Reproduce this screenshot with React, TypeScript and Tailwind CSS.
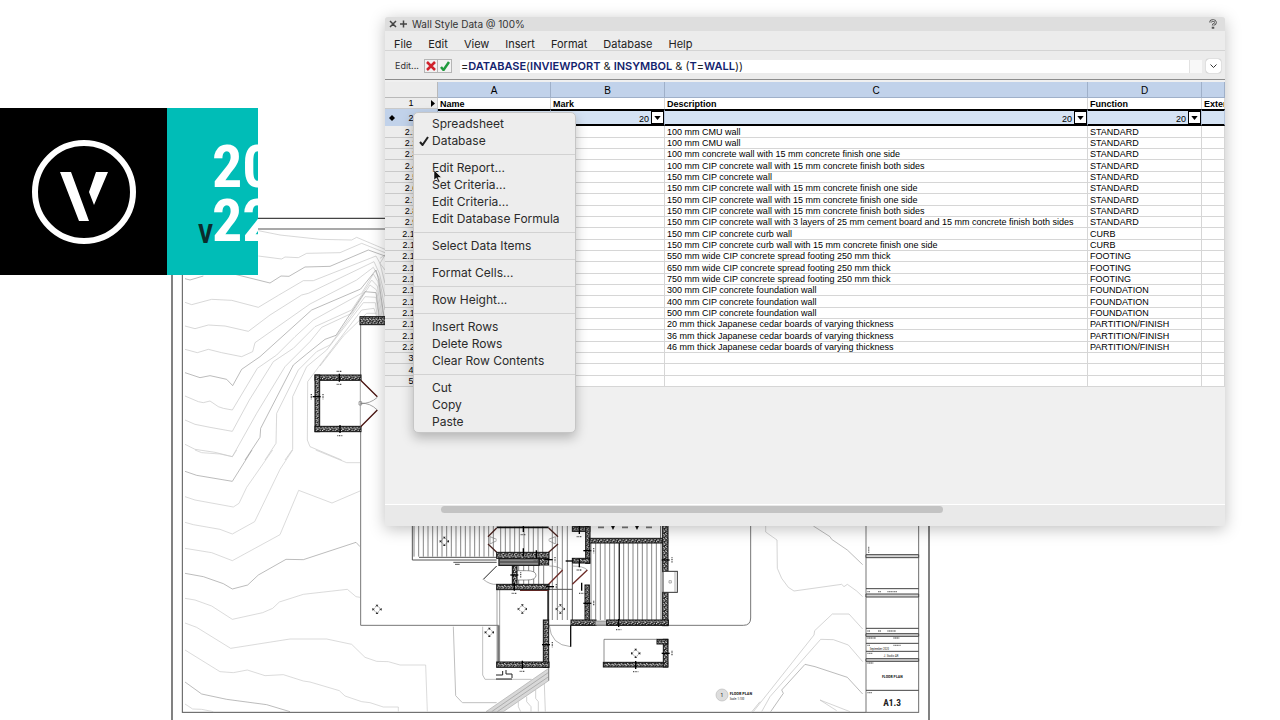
import { Fragment } from "react";

const menuBar = ["File", "Edit", "View", "Insert", "Format", "Database", "Help"];

const contextMenu = [
  ["Spreadsheet", "Database"],
  ["Edit Report...", "Set Criteria...", "Edit Criteria...", "Edit Database Formula"],
  ["Select Data Items"],
  ["Format Cells..."],
  ["Row Height..."],
  ["Insert Rows", "Delete Rows", "Clear Row Contents"],
  ["Cut", "Copy", "Paste"],
];

const walls = [
  ["100 mm CMU wall", "STANDARD"],
  ["100 mm CMU wall", "STANDARD"],
  ["100 mm concrete wall with 15 mm concrete finish one side", "STANDARD"],
  ["100 mm CIP concrete wall with 15 mm concrete finish both sides", "STANDARD"],
  ["150 mm CIP concrete wall", "STANDARD"],
  ["150 mm CIP concrete wall with 15 mm concrete finish one side", "STANDARD"],
  ["150 mm CIP concrete wall with 15 mm concrete finish one side", "STANDARD"],
  ["150 mm CIP concrete wall with 15 mm concrete finish both sides", "STANDARD"],
  [
    "150 mm CIP concrete wall with 3 layers of 25 mm cement board and 15 mm concrete finish both sides",
    "STANDARD",
  ],
  ["150 mm CIP concrete curb wall", "CURB"],
  ["150 mm CIP concrete curb wall with 15 mm concrete finish one side", "CURB"],
  ["550 mm wide CIP concrete spread footing 250 mm thick", "FOOTING"],
  ["650 mm wide CIP concrete spread footing 250 mm thick", "FOOTING"],
  ["750 mm wide CIP concrete spread footing 250 mm thick", "FOOTING"],
  ["300 mm CIP concrete foundation wall", "FOUNDATION"],
  ["400 mm CIP concrete foundation wall", "FOUNDATION"],
  ["500 mm CIP concrete foundation wall", "FOUNDATION"],
  ["20 mm thick Japanese cedar boards of varying thickness", "PARTITION/FINISH"],
  ["36 mm thick Japanese cedar boards of varying thickness", "PARTITION/FINISH"],
  ["46 mm thick Japanese cedar boards of varying thickness", "PARTITION/FINISH"],
];

const rows = [
  ...walls.map(([description, fn], i) => ({ label: `2.${i + 1}`, description, fn })),
  ...["3", "4", "5"].map((label) => ({ label, description: "", fn: "" })),
];

// the drawing is laid out at three units to the pixel
const contoursTop = [
  "265,62 330,75 450,88 545,90 560,82 645,118",
  "265,138 335,147 345,141 385,143 410,130 510,128 575,100 645,128",
  "45,277 65,284 125,268 185,271 265,292 325,256 400,212 430,212 618,138 630,160 645,220",
  "45,348 75,356 115,345 165,348 235,364 300,315 395,255 415,250 612,155 628,190 645,260",
  "45,418 82,428 115,418 155,428 215,440 248,425 255,398 420,282 560,210 610,172 628,205 645,300",
  "45,558 85,575 100,578 120,573 145,590 160,595 187,600 262,475 320,435 375,380 430,330 575,250 610,192 624,215 640,320",
  "45,630 75,643 120,652 187,664 238,570 310,455 370,415 435,350 545,300 605,210 622,228 636,320",
  "45,703 75,718 135,727 187,740 260,610 345,470 420,395 455,352 545,310 600,225 620,240 632,320",
  "285,750 318,700 320,610 385,480 440,425 480,405 585,260 618,262 626,320",
  "345,750 368,718 368,560 410,470 470,420 580,278 616,278 622,320",
  "515,750 420,710 412,690 413,515 465,445 575,300 612,295 620,320",
  "450,468 520,378 590,310 620,310",
  "630,145 645,135 630,160 645,180",
];
const contoursTopDark = [
  "45,206 60,210 100,198",
  "195,193 300,219 333,198 357,199 405,171 480,169 595,120 645,138",
  "45,488 90,503 120,497 170,508 188,527 215,478 270,440 425,300 572,237 618,180 626,210 642,320",
  "225,750 270,682 272,655 370,465 410,432 465,388 498,376 585,245 618,248 628,320",
];
const contoursLeft = [
  "75,0 95,8 150,12 187,20 200,0",
  "437,0 530,38 570,38",
  "45,140 75,150 190,171 207,160 230,112 308,0",
  "45,217 70,224 150,238 187,252 254,215 330,58 368,0",
  "45,295 125,308 187,332 330,254 386,121 486,159 570,123",
  "45,445 75,450 125,468 187,508 278,488 308,475 328,456 400,433 532,418 558,440 570,442",
  "45,519 80,532 182,595 360,567 470,567 545,583 585,622 620,634 655,635 690,645 767,645 772,785",
  "45,600 150,665 190,668 232,660 285,677 340,674 400,693 420,696 508,722 525,738 575,755 600,758 640,771 685,771 685,785",
  "45,762 68,777 95,778 130,785",
];
const contoursLeftDark = [
  "45,64 80,76 187,94 246,0",
  "45,370 100,380 160,401 187,417 233,405 265,375 348,328 400,329 558,277 570,290",
  "45,696 95,732 170,748 290,764 360,785",
];
const contoursRight = [
  "77,136 77,156 111,180 112,265 125,295 145,322 162,333 305,313 312,320 322,313 350,333 368,350",
  "368,447 327,402 277,402 224,452 222,465 40,695",
  "368,545 325,495 280,479 242,478 90,650 65,695",
  "290,692 240,660 330,695",
];
const contoursRightDark = [
  "220,138 270,170 275,178 322,210 368,254",
  "368,642 322,592 225,560 195,553 125,630 130,640 92,695",
];

const coreWalls = [
  [290, 97, 157, 18], [418, 115, 28, 20], [290, 193, 157, 16], [337, 137, 14, 57],
  [430, 300, 16, 142], [290, 426, 157, 16], [517, 20, 54, 14], [557, 20, 13, 110],
  [517, 115, 52, 14], [555, 195, 13, 120], [513, 300, 75, 16],
];
const eastWalls = [
  [28, 55, 235, 14], [248, 15, 16, 140], [248, 217, 16, 100], [80, 300, 185, 16],
  [70, 427, 193, 14], [250, 358, 14, 83], [231, 358, 32, 14],
];
const annexWalls = [
  [435, 495, 138, 16], [435, 495, 14, 170], [435, 649, 138, 16], [570, 320, 80, 24],
];

const range = (from: number, to: number, step: number) =>
  Array.from({ length: Math.floor((to - from) / step) + 1 }, (_, i) => from + i * step);

function Lines({ points, stroke }: { points: string[]; stroke: string }) {
  return (
    <g fill="none" stroke={stroke} strokeWidth={2}>
      {points.map((p) => (
        <polyline key={p} points={p} />
      ))}
    </g>
  );
}

function Walls({ rects }: { rects: number[][] }) {
  return (
    <g fill="url(#concrete)" stroke="#111" strokeWidth={3}>
      {rects.map(([x, y, w, h]) => (
        <rect key={`${x}-${y}-${w}`} x={x} y={y} width={w} height={h} />
      ))}
    </g>
  );
}

function Target({ x, y }: { x: number; y: number }) {
  return (
    <g transform={`translate(${x} ${y})`}>
      <circle r="9" fill="none" stroke="#444" strokeWidth="2" strokeDasharray="4 3" />
      <path d="M-4-14h8l-4 6zM-4 14h8l-4-6zM-14-4v8l6-4zM14-4v8l-6-4z" fill="#222" />
    </g>
  );
}

// wall type marker: a short bar across the wall
function Tick({ x, y, flat }: { x: number; y: number; flat?: boolean }) {
  return (
    <g stroke="#000" strokeWidth="4">
      <path d={flat ? `M${x - 12} ${y}h24` : `M${x} ${y - 12}v24`} />
      <path
        d={flat ? `M${x + 19} ${y - 8}v16` : `M${x - 8} ${y + 20}h16`}
        stroke="#555"
        strokeDasharray="3 2"
      />
    </g>
  );
}

function FloorPlan() {
  return (
    <svg
      viewBox="0 0 3840 2160"
      className="absolute left-0 top-0 h-[720px] w-[1280px]"
      aria-hidden
    >
      <defs>
        <pattern id="concrete" width="19" height="13" patternUnits="userSpaceOnUse">
          <rect width="19" height="13" fill="#1c1c1c" />
          <path
            d="M1 3l5 2M9 1l4 4M15 7l3-3M4 10l5-3M12 11l4 0M0 12l3-1"
            stroke="#fff"
            strokeWidth="3"
          />
        </pattern>
      </defs>

      {/* sheet frame */}
      <path d="M516 2160V655H2787V2160" fill="none" stroke="#444" strokeWidth="4" />
      <rect x="547" y="687" width="2208" height="1450" fill="none" stroke="#555" strokeWidth="3" />

      {/* north-west: contours and the entry pavilion */}
      <g transform="translate(510 630)">
        <Lines points={contoursTop} stroke="#c4c4c4" />
        <Lines points={contoursTopDark} stroke="#9a9a9a" />
      </g>
      <path
        d="M1082 950V1876H2230Q2252 1876 2252 1854V1500"
        fill="#fff"
        stroke="#777"
        strokeWidth="3"
      />
      <g transform="translate(510 630)">
        <rect x="450" y="512" width="130" height="136" fill="#fff" />
        <Walls rects={annexWalls} />
        <path d="M572 511L622 560M572 650L622 600" stroke="#4a1512" strokeWidth="4" />
        <path
          d="M622 562Q600 582 572 580Q600 578 622 600M567 575h8v10h-8zM571 511V650"
          fill="none"
          stroke="#777"
          strokeWidth="2"
        />
        <Tick x={508} y={503} />
        <Tick x={510} y={657} />
        <Tick x={440} y={560} flat />
        <path d="M500 484h16M424 552v16" stroke="#444" strokeWidth="4" strokeDasharray="3 2" />
      </g>

      <g transform="translate(510 1350)">
        <Lines points={contoursLeft} stroke="#c8c8c8" />
        <Lines points={contoursLeftDark} stroke="#9a9a9a" />
        <Target x={621} y={478} />
      </g>

      {/* core of the house */}
      <g transform="translate(1200 1560)">
        <path
          d="M160 320L167 527 187 548H290M248 320V465L255 478H395"
          fill="none"
          stroke="#c0c0c0"
          strokeWidth="3"
        />
        <path d="M258 575L446 445V482L310 575z" fill="#d8d8d8" stroke="#aaa" strokeWidth="2" />
        <path d="M275 575L446 457M292 575L446 470" stroke="#999" strokeWidth="2" />
        <path
          d="M355 546V560L362 575M380 530V545L393 560V575M407 510V535L415 545V575M433 492L436 575"
          fill="none"
          stroke="#bbb"
          strokeWidth="2"
        />
        <path d="M446 442V482" stroke="#888" strokeWidth="3" />
        <rect x="37" y="0" width="253" height="120" fill="#fff" />
        <g stroke="#4a4a4a" strokeWidth="2">
          {range(42, 290, 14).map((x) => (
            <path key={x} d={`M${x} 0V110`} />
          ))}
          {range(302, 440, 14).map((x) => (
            <path key={x} d={`M${x} 20V97`} />
          ))}
          {range(356, 440, 15).map((x) => (
            <path key={x} d={`M${x} 137V193`} />
          ))}
          {range(457, 515, 15).map((x) => (
            <path key={x} d={`M${x} 0V300`} />
          ))}
        </g>
        <path
          d="M37 0V120H290M160 127H290M57 112H290M165 133h14M446 208H517M446 208V300M517 130V300"
          fill="none"
          stroke="#555"
          strokeWidth="3"
        />
        <path d="M297 116h120v20H297z" fill="#8a8a8a" stroke="#222" strokeWidth="4" />
        <path d="M300 126h115" stroke="#333" strokeWidth="3" />
        <rect x="296" y="210" width="134" height="216" fill="#fff" />
        <path d="M291 210V426M299 210V426" stroke="#777" strokeWidth="2" />
        <path d="M292 316h7v110h-7z" fill="#777" />
        <path d="M444 210V300" stroke="#111" strokeWidth="4" />
        <path d="M290 22H446" stroke="#111" strokeWidth="5" />
        <path d="M350 152h30q28 0 28 14t-28 14h-30z" fill="#fff" stroke="#666" strokeWidth="2" />
        <path
          d="M290 24L264 50M290 97L264 72M446 24L474 50M446 97L474 72"
          stroke="#4a2420"
          strokeWidth="4"
        />
        <path d="M290 138L250 178" stroke="#222" strokeWidth="3" />
        <path d="M290 58l-20-8 0 22 20-10M446 58l20-8 0 22-20-10" fill="none" stroke="#777" strokeWidth="2" />
        <path d="M250 178Q270 195 290 193M448 138Q476 138 488 150M517 138Q550 138 562 150" fill="none" stroke="#888" strokeWidth="2" />
        <path d="M488 150L446 193M562 150L517 193M360 211H446" stroke="#6d2b27" strokeWidth="4" />
        <path d="M448 316Q452 375 512 380" fill="none" stroke="#888" strokeWidth="2" />
        <path d="M446 316H512" fill="none" stroke="#888" strokeWidth="2" />
        <path d="M512 316V380" fill="none" stroke="#111" strokeWidth="4" />
        <path d="M288 465h20v-12M318 450v12h18v12M288 477h48" fill="none" stroke="#222" strokeWidth="3" />
        <Walls rects={coreWalls} />
        <Target x={133} y={64} />
        <Target x={367} y={267} />
        <Target x={268} y={337} />
        <Target x={481} y={267} />
        <Tick x={370} y={24} />
        <Tick x={370} y={97} />
        <Tick x={409} y={103} />
        <Tick x={343} y={200} />
        <Tick x={367} y={434} />
        <Tick x={538} y={30} />
        <Tick x={545} y={200} />
        <Tick x={538} y={130} />
        <Tick x={438} y={374} flat />
        <Tick x={446} y={119} flat />
        <Tick x={343} y={165} flat />
        <Tick x={450} y={200} flat />
        <Tick x={562} y={92} flat />
        <Tick x={562} y={250} flat />
        <Tick x={509} y={123} flat />
      </g>

      {/* east room, terrace box and drawing title */}
      <g transform="translate(1740 1560)">
        <rect x="32" y="0" width="216" height="56" fill="#fff" />
        <g stroke="#4a4a4a" strokeWidth="2">
          {range(33, 248, 14).map((x) => (
            <path key={x} d={`M${x} 68V300`} />
          ))}
        </g>
        <path d="M118 68V300" stroke="#111" strokeWidth="3" />
        <path d="M30 0V56M242 0V56" stroke="#555" strokeWidth="3" />
        <path d="M55 22h16M127 22h16M199 22h16" stroke="#333" strokeWidth="5" strokeDasharray="4 2" />
        <path d="M92 16h14l-7 14zM164 16h14l-7 14z" fill="#111" />
        <rect x="46" y="303" width="34" height="12" fill="#bbb" stroke="#777" strokeWidth="2" />
        <Walls rects={eastWalls} />
        <rect x="249" y="154" width="43" height="63" fill="#fff" stroke="#333" strokeWidth="3" />
        <path d="M285 156v60M267 182h7v7h-7z" fill="none" stroke="#888" strokeWidth="2" />
        <path d="M72 427V358H231" fill="none" stroke="#555" strokeWidth="2" />
        <Target x={167} y={400} />
        <Tick x={116} y={309} />
        <Tick x={167} y={435} />
        <Tick x={257} y={120} flat />
        <Tick x={257} y={400} flat />
        <circle cx="426" cy="525" r="18" fill="#ddd" stroke="#bbb" strokeWidth="2" />
        <g fontFamily="Roboto Condensed, Liberation Sans, sans-serif" fill="#222">
          <text x="426" y="531" fontSize="17" textAnchor="middle">1</text>
          <text x="449" y="526" fontSize="13" fontWeight="700">FLOOR PLAN</text>
          <text x="449" y="539" fontSize="9">Scale: 1:100</text>
        </g>
        <path d="M514 577L540 545" stroke="#bbb" strokeWidth="2" />
      </g>

      {/* south-east contours and title block */}
      <g transform="translate(2220 1440)">
        <Lines points={contoursRight} stroke="#c0c0c0" />
        <Lines points={contoursRightDark} stroke="#999" />
        <rect x="378" y="0" width="158" height="697" fill="#fff" stroke="#777" strokeWidth="3" />
        <g fill="#d4d4d4" stroke="#444" strokeWidth="3">
          <path d="M378 224h158v9H378zM378 342h158v9H378zM378 461h158v8H378zM378 536h158v8H378z" />
          <path d="M378 326h158M378 445h158M378 490h158M378 514h158M378 631h158" />
        </g>
        <path
          d="M382 335h8M414 335h10M442 335h30M382 453h8M414 453h10M442 453h26M382 474h26M460 474h18M382 496h8M460 496h22M382 520h16M382 549h18M382 638h14M386 200v20"
          stroke="#888"
          strokeWidth="4"
          strokeDasharray="4 1"
        />
        <g
          fontFamily="Roboto Condensed, Liberation Sans, sans-serif"
          fill="#222"
          textAnchor="middle"
        >
          <text x="418" y="509" fontSize="9">September 2020</text>
          <text x="453" y="530" fontSize="9">J. Studio AR</text>
          <text x="457" y="594" fontSize="12" fontWeight="700">FLOOR PLAN</text>
          <text x="456" y="677" fontSize="28" fontWeight="700">A1.3</text>
        </g>
      </g>
    </svg>
  );
}

function Banner() {
  return (
    <div className="absolute left-0 top-[108px] flex h-[167px] w-[258px] overflow-hidden">
      <div className="grid w-[167px] shrink-0 place-items-center bg-black">
        <svg viewBox="0 0 104 104" className="size-[104px]" role="img" aria-label="Vectorworks">
          <circle cx="52" cy="52" r="49" fill="none" stroke="#fff" strokeWidth="6" />
          <path d="M28 32h11l18 49H47zM64 32h12L62 65l-5-13z" fill="#fff" />
        </svg>
      </div>
      <div className="relative flex-1 bg-[#00bdb7] font-['Roboto_Condensed','Liberation_Sans_Narrow',sans-serif] font-bold">
        <p className="absolute left-[45px] top-[32px] text-[60px] leading-[54px] text-white">
          20
          <br />
          22
        </p>
        <span className="absolute left-[31px] top-[113px] text-[26px] leading-[26px] text-[#0b2d2c]">
          V
        </span>
      </div>
    </div>
  );
}

function FilterCell() {
  return (
    <div className="flex h-[13px] items-center justify-end gap-[2px]">
      <span className="pt-[3px]">20</span>
      <button
        type="button"
        aria-label="Filter"
        className="grid h-[13px] w-[13px] place-items-center border border-black bg-white"
      >
        <svg viewBox="0 0 8 5" className="h-1 w-[7px]">
          <path d="M0 0h8L4 5z" />
        </svg>
      </button>
    </div>
  );
}

const cell = "border-b border-r border-[#d6d6d6] p-0 pl-[2px]";

function Sheet() {
  return (
    <table className="w-full table-fixed border-separate border-spacing-0 whitespace-nowrap bg-white text-left font-['Liberation_Sans',Arial,sans-serif] text-[9px] leading-[10px] text-black">
      <colgroup>
        <col className="w-[53px]" />
        <col className="w-[113px]" />
        <col className="w-[114px]" />
        <col />
        <col className="w-[114px]" />
        <col className="w-[23px]" />
      </colgroup>
      <thead>
        <tr className="h-4 text-center text-[10px]">
          <td className="border-b border-r border-[#b9b9b9] bg-[#ececec] p-0" />
          {["A", "B", "C", "D", ""].map((c) => (
            <th
              key={c}
              className="border-b border-r border-[#9fb0c9] bg-[#c1d2ea] p-0 pt-[3px] text-center font-normal"
            >
              {c}
            </th>
          ))}
        </tr>
      </thead>
      <tbody>
        <tr className="h-[11px]">
          <th className="relative border-b border-r border-[#c9c9c9] bg-[#ececec] p-0 text-center font-normal">
            1
            <svg viewBox="0 0 4 7" className="absolute right-[2px] top-[2px] h-[7px] w-1">
              <path d="M0 0v7l4-3.5z" />
            </svg>
          </th>
          {["Name", "Mark", "Description", "Function", "Exterior"].map((h) => (
            <td key={h} className="overflow-hidden border-r border-[#d6d6d6] p-0 pl-[2px] font-bold">
              {h}
            </td>
          ))}
        </tr>
        <tr className="h-[17px]">
          <th className="relative border-r border-[#9fb0c9] bg-[#c1d2ea] p-0 text-center font-normal">
            2
            <svg viewBox="0 0 6 6" className="absolute left-1 top-[6px] size-[6px]">
              <path d="M3 0l3 3-3 3-3-3z" />
            </svg>
          </th>
          {["A", "B", "C", "D", "E"].map((c) => (
            <td key={c} className="border-y-2 border-r border-y-black border-r-[#b5c6dd] bg-[#d5e3f4] p-0">
              {"BCD".includes(c) && <FilterCell />}
            </td>
          ))}
        </tr>
        {rows.map((r, i) => (
          <tr key={r.label} className={i % 3 === 0 ? "h-3" : "h-[11px]"}>
            <th className="border-b border-r border-[#c9c9c9] bg-[#ececec] p-0 text-center font-normal">
              {r.label}
            </th>
            <td className={cell} />
            <td className={cell} />
            <td className={cell}>{r.description}</td>
            <td className={cell}>{r.fn}</td>
            <td className={cell} />
          </tr>
        ))}
      </tbody>
    </table>
  );
}

function WorksheetWindow() {
  return (
    <section className="absolute left-[385px] right-[55px] top-[17px] flex flex-col overflow-hidden rounded-t-[3px] bg-[#ececec] shadow-[0_3px_16px_rgba(0,0,0,0.25)]">
      <header className="flex h-[14px] items-center bg-[#dedede] px-1 text-[10px] text-[#333]">
        <svg viewBox="0 0 18 8" className="mr-[5px] h-2 w-[18px]" stroke="#444" strokeWidth="1.5">
          <path d="M1 1l6 6M7 1l-6 6M11 4h7M14.5 0.5v7" />
        </svg>
        <h1>Wall Style Data @ 100%</h1>
        <button type="button" aria-label="Help" className="ml-auto mr-1">
          <svg viewBox="0 0 8 10" className="h-[10px] w-2" fill="none">
            <path d="M1.500 3.500a2.500 2 0 1 1 3.500 1.800Q4 5.600 4 6.500M4 7.800v2" stroke="#555" strokeWidth="2.500" />
            <path d="M1.500 3.500a2.500 2 0 1 1 3.500 1.800Q4 5.600 4 6.500" stroke="#ddd" strokeWidth="1" />
          </svg>
        </button>
      </header>

      <nav className="flex h-5 items-center gap-4 border-b border-[#d4d4d4] px-[9px] pt-[7px] text-[11px] text-[#222]">
        {menuBar.map((m) => (
          <button key={m} type="button">
            {m}
          </button>
        ))}
      </nav>

      <div className="flex h-7 items-center pl-[10px] pr-1 pt-[2px] text-[#333]">
        <span className="w-[29px] text-[9px]">Edit...</span>
        <button
          type="button"
          aria-label="Cancel"
          className="grid h-[14px] w-[14px] place-items-center border border-[#b5b5b5] bg-[#f2f2f2]"
        >
          <svg viewBox="0 0 10 10" className="size-[10px]" stroke="#d0222c" strokeWidth="2.500">
            <path d="M1 1l8 8M9 1l-8 8" />
          </svg>
        </button>
        <button
          type="button"
          aria-label="Accept"
          className="grid h-[14px] w-[14px] place-items-center border border-l-0 border-[#b5b5b5] bg-[#f2f2f2]"
        >
          <svg viewBox="0 0 10 10" className="size-[10px]" fill="none" stroke="#1f9a3c" strokeWidth="2.500">
            <path d="M1 6l2.500 3L9 1" />
          </svg>
        </button>
        <div
          role="textbox"
          aria-label="Formula"
          contentEditable
          suppressContentEditableWarning
          className="ml-2 h-[13px] flex-1 border-r border-[#e2e2e2] bg-white pl-px text-[11px] leading-[13px] text-[#222] outline-none"
        >
          =<b className="font-semibold text-[#13246e]">DATABASE</b>(
          <b className="font-semibold text-[#13246e]">INVIEWPORT</b> &amp;{" "}
          <b className="font-semibold text-[#13246e]">INSYMBOL</b> &amp; (
          <b className="font-semibold text-[#13246e]">T</b>=
          <b className="font-semibold text-[#13246e]">WALL</b>))
        </div>
        <span className="mr-1 h-[13px] w-3 bg-[#f8f8f8]" />
        <button
          type="button"
          aria-label="Expand formula bar"
          className="grid h-[14px] w-[15px] place-items-center rounded-[3px] bg-white shadow-[0_0_1px_rgba(0,0,0,0.5)]"
        >
          <svg viewBox="0 0 7 4" className="h-1 w-[7px]" fill="none" stroke="#333">
            <path d="M0.500 0.500l3 3 3-3" />
          </svg>
        </button>
      </div>

      <div className="min-h-[425px] border-t border-[#8d8d8d] bg-[#f0f0f0] pt-[2px]">
        <Sheet />
      </div>

      <div className="h-[22px] border-t border-white bg-[#e9e9e9] pl-14 pt-px">
        <div className="h-[7px] w-[64%] rounded-full bg-[#c3c3c3]" />
      </div>
    </section>
  );
}

function ContextMenu() {
  return (
    <div
      role="menu"
      className="absolute left-[413px] top-[112px] w-[163px] rounded-[5px] border border-[#c6c6c6] bg-[#ededed] pb-[2px] pt-[3px] text-[12px] leading-[16px] text-[#2b2b2b] shadow-[0_5px_12px_rgba(0,0,0,0.25)]"
    >
      {contextMenu.map((group, i) => (
        <Fragment key={group[0]}>
          {i > 0 && <hr className="my-[5px] h-px border-0 bg-[#d2d2d2]" />}
          <div className="flex flex-col gap-px">
            {group.map((item) => (
              <button
                key={item}
                type="button"
                role="menuitem"
                className="relative h-4 pl-[18px] text-left"
              >
                {item === "Database" && (
                  <svg
                    viewBox="0 0 10 10"
                    className="absolute left-[5px] top-[3px] size-[10px]"
                    fill="none"
                    stroke="#222"
                    strokeWidth="2"
                  >
                    <path d="M1 6l2.500 3L9 1" />
                  </svg>
                )}
                {item}
              </button>
            ))}
          </div>
        </Fragment>
      ))}
      <svg viewBox="0 0 9 14" className="absolute left-[19px] top-[56px] h-[14px] w-[9px]" aria-hidden>
        <path
          d="M1 1v10l2.500-2 2 4.500 1.500-.8-2-4.200H8.500z"
          fill="#111"
          stroke="#fff"
          strokeWidth="0.500"
        />
      </svg>
    </div>
  );
}

export default function App() {
  return (
    <main className="relative h-screen min-h-[720px] overflow-hidden bg-white font-[Inter,sans-serif]">
      <FloorPlan />
      <Banner />
      <WorksheetWindow />
      <ContextMenu />
    </main>
  );
}
